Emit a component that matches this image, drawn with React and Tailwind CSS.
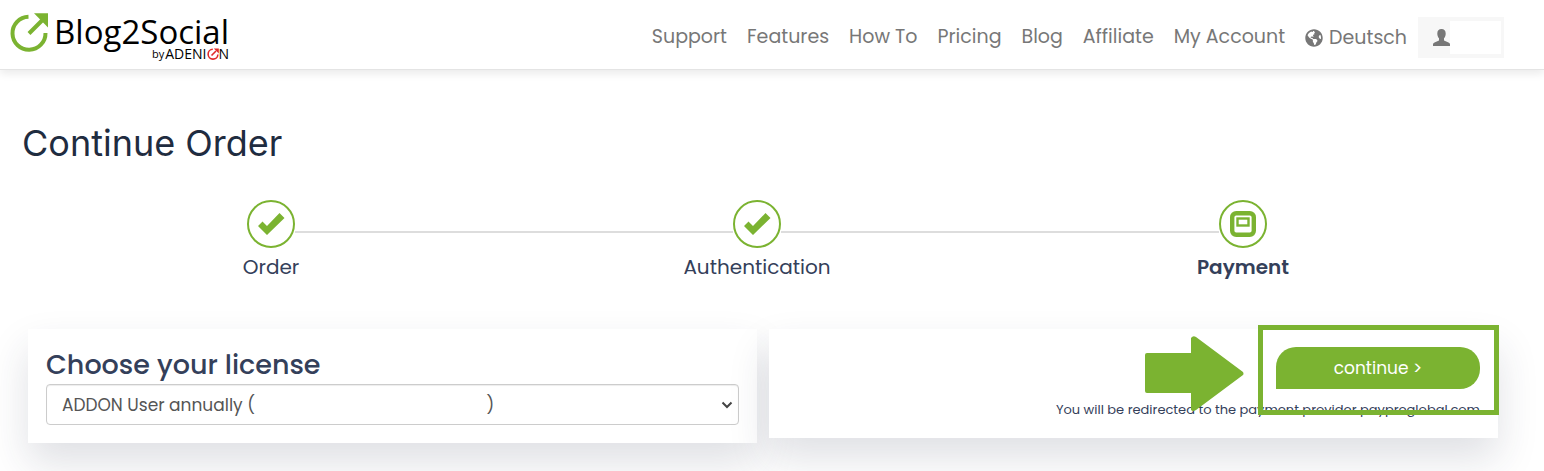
import { FaGlobeAmericas } from 'react-icons/fa'

const links = ['Support', 'Features', 'How To', 'Pricing', 'Blog', 'Affiliate', 'My Account']

const steps = [
  { label: 'Order', state: 'done' },
  { label: 'Authentication', state: 'done' },
  { label: 'Payment', state: 'current' },
]

// the price between the brackets is left blank
const license = `ADDON User annually (${'\u00a0'.repeat(51)})`

function Logo() {
  return (
    <a href="#" className="flex items-start text-black shrink-0" aria-label="Blog2Social">
      <svg className="w-10 h-10 mt-3" viewBox="0 0 40 40" fill="none">
        <path d="M18.500 4.800A16.500 16.500 0 1 0 35.500 21" stroke="#7bb331" strokeWidth="4" />
        <path d="M19 21.500L33 7.500" stroke="#7bb331" strokeWidth="4" />
        <path d="M24 1.300H38V15.500z" fill="#7bb331" />
      </svg>
      <div className="flex flex-col items-end ml-1 pt-[14px]">
        <span className="text-[33px] leading-9 font-['Open_Sans',sans-serif]">Blog2Social</span>
        <span className="flex items-center -mt-[2px] text-sm leading-3 font-['Open_Sans',sans-serif]">
          <span className="text-[11px] mr-px">by</span>
          ADENI
          <svg className="w-3 h-3" viewBox="0 0 12 12" fill="none" stroke="#e02b2b">
            <path d="M5.800 1.300A4.900 4.900 0 1 0 10.900 6.500M4.500 7.500L9 3" strokeWidth="1.600" />
            <path d="M6.800 .5H11.800V5.500z" fill="#e02b2b" stroke="none" />
          </svg>
          N
        </span>
      </div>
    </a>
  )
}

function Navbar() {
  return (
    <header className="h-[70px] flex items-start justify-between pl-[10px] pr-10 border-b border-[#e4e4e4] shadow-[0_4px_8px_rgba(0,0,0,0.08)]">
      <Logo />
      <nav className="flex items-center pt-[17px] text-[#777] text-[19px] leading-6">
        <div className="flex gap-5 pb-[2px]">
          {links.map((l) => (
            <a key={l} href="#">{l}</a>
          ))}
        </div>
        <a href="#" className="flex items-center gap-[6px] ml-5">
          <FaGlobeAmericas className="w-[18px] h-[18px]" />
          Deutsch
        </a>
        <button className="flex items-center ml-[11px] w-[86px] h-[41px] bg-[#f7f7f7] pl-[15px] pr-[3px]" aria-label="Account">
          <svg className="w-[17px] h-[17px]" viewBox="0 0 17 17" fill="#777">
            <path d="M8.500 0C5.800 0 4.300 1.700 4.300 4.500C4.300 6.500 5 8.300 6 9.300V11.500L1.500 13.500C.5 14 0 14.600 0 15.500V17H17V15.500C17 14.600 16.500 14 15.500 13.500L11 11.500V9.300C12 8.300 12.700 6.500 12.700 4.500C12.700 1.700 11.200 0 8.500 0z" />
          </svg>
          <span className="flex-1 h-[33px] bg-white" />
        </button>
      </nav>
    </header>
  )
}

function Step({ label, state, first, last }) {
  return (
    <li className="flex-1 flex flex-col items-center">
      <div className="w-full flex items-center">
        <span className={first ? 'flex-1' : 'flex-1 h-[2px] mt-4 bg-[#ddd]'} />
        <span className="w-12 h-12 rounded-full border-2 border-[#7bb331] flex items-center justify-center">
          {state === 'done' ? (
            <svg className="w-7 h-6" viewBox="0 0 28 24" fill="#7bb331">
              <path d="M1 14L5.500 9.500L10 14L22.500 1L27.500 6L10 23z" />
            </svg>
          ) : (
            <svg className="w-[26px] h-[26px]" viewBox="0 0 26 26" fill="none" stroke="#7bb331">
              <rect x="2.200" y="2.200" width="21.600" height="21.600" rx="4" strokeWidth="4.400" />
              <rect x="7.500" y="7.500" width="11" height="7" strokeWidth="2.400" />
            </svg>
          )}
        </span>
        <span className={last ? 'flex-1' : 'flex-1 h-[2px] mt-4 bg-[#ddd]'} />
      </div>
      <span className={state === 'current' ? 'mt-1 text-xl leading-[30px] font-semibold' : 'mt-1 text-xl leading-[30px]'}>{label}</span>
    </li>
  )
}

export default function App() {
  return (
    <div className="bg-white text-[#34405a] font-[Poppins,Inter,sans-serif] overflow-hidden">
      <Navbar />
      <main className="pt-12 pb-7 pl-7 pr-[46px]">
        <h1 className="-ml-[6px] text-4xl leading-[50px] text-[#1f2c40] font-[Inter,sans-serif]">Continue Order</h1>

        <ol className="flex mt-8 mr-3">
          {steps.map((s, i) => (
            <Step key={s.label} {...s} first={i === 0} last={i === steps.length - 1} />
          ))}
        </ol>

        <div className="flex items-start gap-3 mt-[47px]">
          <section className="flex-1 bg-white px-[18px] pt-[18px] pb-[18px] shadow-[0_20px_40px_rgba(40,50,75,0.15)]">
            <label htmlFor="license" className="block pb-[2px] text-[27px] leading-[35px] font-medium">Choose your license</label>
            <div className="relative">
              <select
                id="license"
                className="block w-full h-[41px] pl-[15px] pr-8 pt-[2px] appearance-none bg-white border border-[#ccc] rounded text-[17px] text-[#555] shadow-[inset_0_1px_1px_rgba(0,0,0,0.075)]"
              >
                <option>{license}</option>
              </select>
              <svg className="absolute right-[6px] top-4 w-3 h-[10px] pointer-events-none" viewBox="0 0 12 10" fill="none" stroke="#444" strokeWidth="2">
                <path d="M1.500 2.500L6 7L10.500 2.500" />
              </svg>
            </div>
          </section>

          <section className="relative flex-1 flex flex-col items-end bg-white px-[18px] pt-[18px] pb-[18px] shadow-[0_20px_40px_rgba(40,50,75,0.15)]">
            <button className="w-[204px] h-[42px] pt-[2px] bg-[#7bb331] text-white text-[17px] rounded-[20px] rounded-bl-none">continue &gt;</button>
            <p className="mt-[11px] text-[13px] leading-5">You will be redirected to the payment provider paypreglobal.com</p>
            <div className="absolute -top-1 -right-px w-[241px] h-[90px] border-[5px] border-[#7bb331]" />
            <svg className="absolute top-[7px] right-[254px] w-[99px] h-[75px]" viewBox="0 0 99 75" fill="#7bb331">
              <path d="M2 17H46V2Q48 -1 51 1L98 36Q99 38 98 39L51 74Q48 76 46 74V57H2Q0 57 0 55V19Q0 17 2 17z" />
            </svg>
          </section>
        </div>
      </main>
    </div>
  )
}
